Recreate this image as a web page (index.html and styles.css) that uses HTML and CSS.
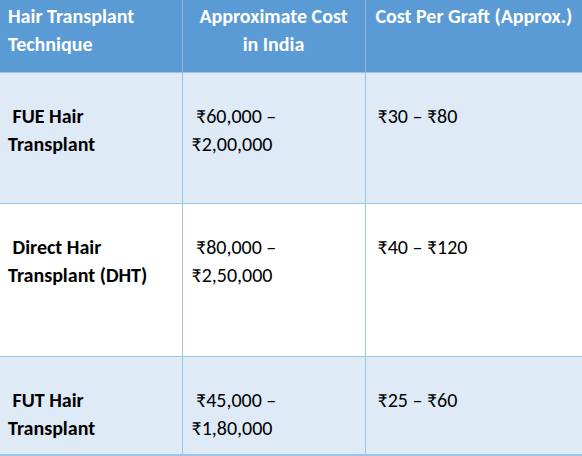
FILE: index.html
```html
<!DOCTYPE html>
<html>
<head>
<meta charset="utf-8">
<link rel="stylesheet" href="styles.css">
</head>
<body>
<table class="cost-table">
  <colgroup>
    <col class="c1"><col class="c2"><col class="c3">
  </colgroup>
  <thead>
    <tr class="head">
      <th class="left">Hair Transplant<br>Technique</th>
      <th class="center">Approximate Cost<br>in India</th>
      <th class="left graft">Cost Per Graft (Approx.)</th>
    </tr>
  </thead>
  <tbody>
    <tr class="row r1">
      <td class="tech">&nbsp;FUE Hair<br>Transplant</td>
      <td>&nbsp;₹60,000 –<br>₹2,00,000</td>
      <td class="graft">₹30 – ₹80</td>
    </tr>
    <tr class="row r2">
      <td class="tech">&nbsp;Direct Hair<br>Transplant (DHT)</td>
      <td>&nbsp;₹80,000 –<br>₹2,50,000</td>
      <td class="graft">₹40 – ₹120</td>
    </tr>
    <tr class="row r3">
      <td class="tech">&nbsp;FUT Hair<br>Transplant</td>
      <td>&nbsp;₹45,000 –<br>₹1,80,000</td>
      <td class="graft">₹25 – ₹60</td>
    </tr>
  </tbody>
</table>
</body>
</html>
```
FILE: styles.css
```css
html, body {
  margin: 0;
  padding: 0;
  background: #ffffff;
}
body {
  font-family: Carlito, Calibri, Lato, "Liberation Sans", sans-serif;
  font-size: 20px;
  color: #000000;
}
.cost-table {
  border-collapse: collapse;
  width: 582px;
  table-layout: fixed;
}
.c1 { width: 182px; }
.c2 { width: 183px; }
.c3 { width: 217px; }
.head th {
  background: #5b9bd5;
  color: #ffffff;
  font-weight: bold;
  height: 72px;
  box-sizing: border-box;
  vertical-align: top;
  padding: 2px 8px 0 8px;
  line-height: 28px;
  border-left: 1px solid #8cb8e2;
}
.head th:first-child { border-left: none; }
.head th.left { text-align: left; }
.head th.center { text-align: center; }
.head th.graft { padding-left: 10px; padding-right: 2px; }
.row td {
  vertical-align: top;
  line-height: 28px;
  padding: 29px 4px 0 9px;
  border-left: 1px solid #9dc3e6;
  border-top: 1px solid #9dc3e6;
  box-sizing: border-box;
}
.row td:first-child { border-left: none; padding-left: 8px; }
.row td.graft { padding-left: 12px; }
.row td.tech { font-weight: bold; }
.r1 td { background: #deeaf6; height: 131px; }
.r2 td { background: #ffffff; height: 153px; }
.r3 td { background: #deeaf6; height: 99px; border-bottom: 2px solid #9dc3e6; }
```
